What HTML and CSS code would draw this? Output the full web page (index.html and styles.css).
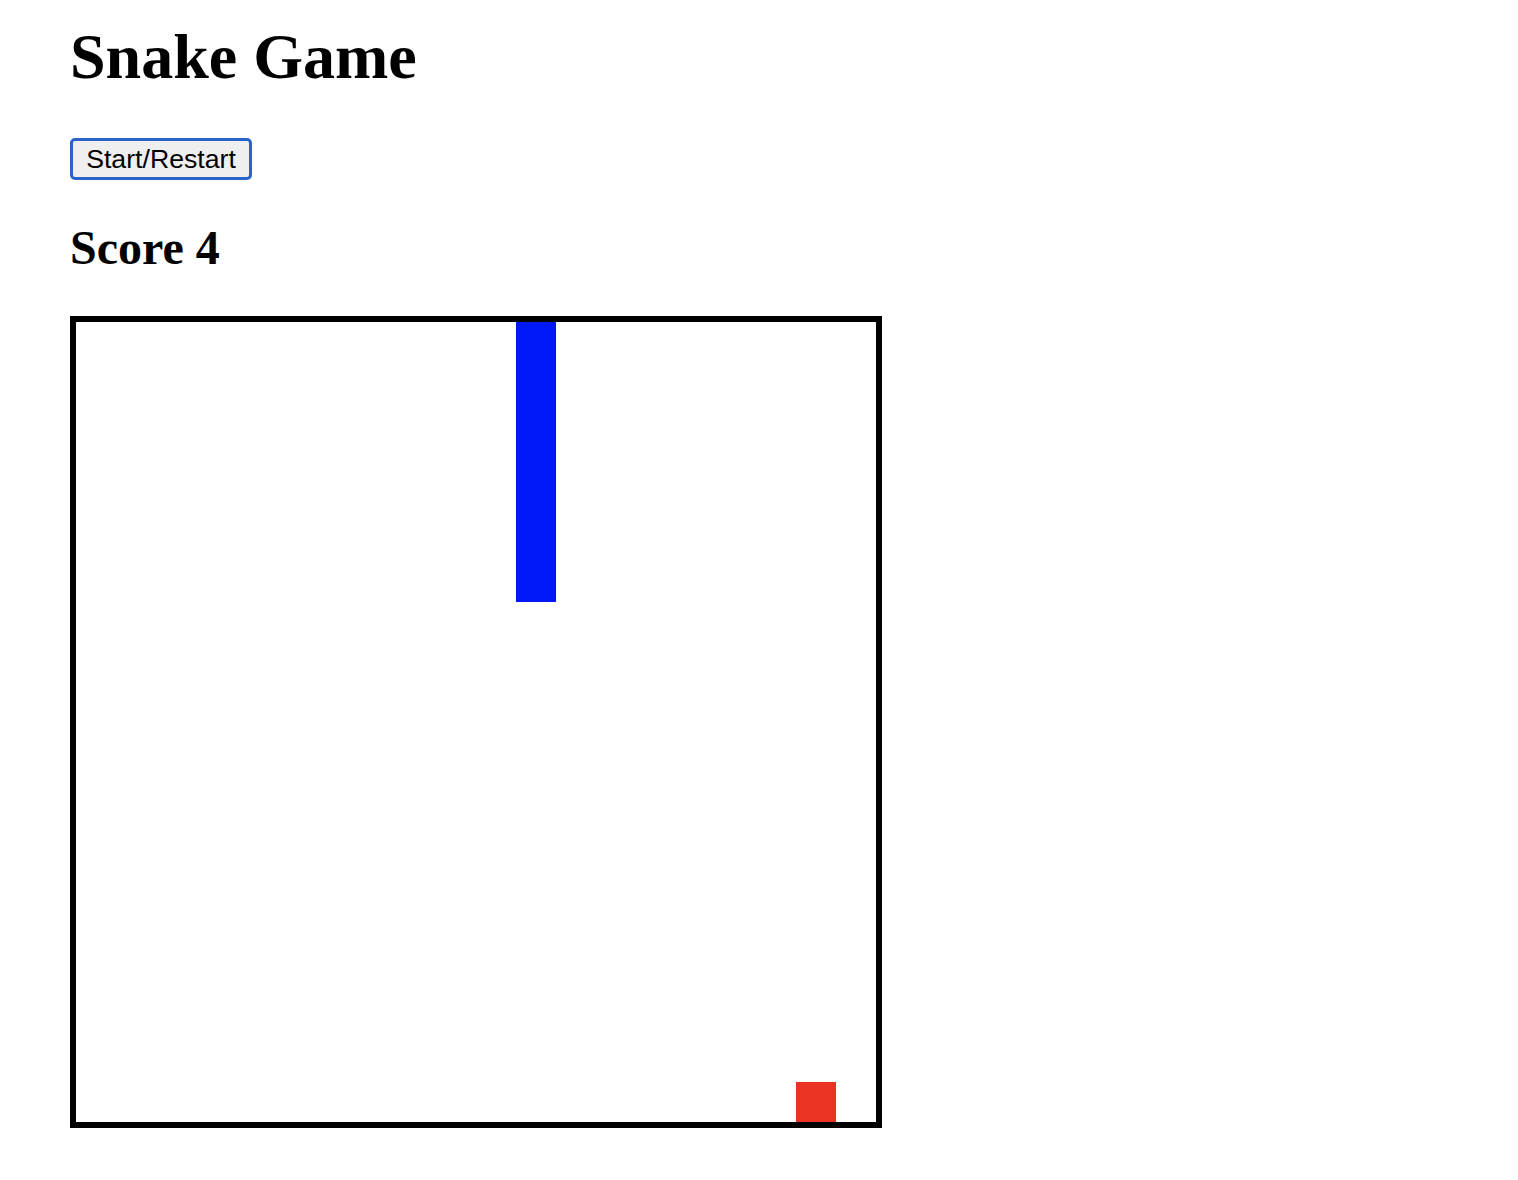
FILE: index.html
```html
<!DOCTYPE html>
<html lang="en">
<head>
<meta charset="utf-8">
<title>Snake Game</title>
<link rel="stylesheet" href="styles.css">
</head>
<body>
<main class="page">
  <h1 class="title">Snake Game</h1>
  <div class="controls">
    <button class="start-btn" type="button">Start/Restart</button>
  </div>
  <h2 class="score">Score 4</h2>
  <div class="board">
    <div class="cell snake" style="grid-area: 1 / 12"></div>
    <div class="cell snake" style="grid-area: 2 / 12"></div>
    <div class="cell snake" style="grid-area: 3 / 12"></div>
    <div class="cell snake" style="grid-area: 4 / 12"></div>
    <div class="cell snake" style="grid-area: 5 / 12"></div>
    <div class="cell snake" style="grid-area: 6 / 12"></div>
    <div class="cell snake" style="grid-area: 7 / 12"></div>
    <div class="cell food" style="grid-area: 20 / 19"></div>
  </div>
</main>
</body>
</html>
```

FILE: styles.css
```css
html, body {
  margin: 0;
  padding: 0;
  background: #ffffff;
}

.page {
  display: flex;
  flex-direction: column;
  align-items: flex-start;
  padding: 20px 0 40px 70px;
  font-family: "Liberation Serif", "Times New Roman", serif;
  color: #000;
}

.title {
  margin: 0;
  font-size: 64px;
  line-height: 74px;
  font-weight: 700;
}

.controls {
  margin-top: 44px;
  display: flex;
}

.start-btn {
  box-sizing: border-box;
  width: 182px;
  height: 42px;
  padding: 0;
  margin: 0;
  border: 3px solid #2b63c8;
  border-radius: 5px;
  background: #efefef;
  color: #000;
  font-family: "Liberation Sans", Arial, sans-serif;
  font-size: 26.67px;
  line-height: 36px;
  text-align: center;
}

.score {
  margin: 40px 0 0 0;
  font-size: 48px;
  line-height: 56px;
  font-weight: 700;
}

.board {
  margin-top: 40px;
  box-sizing: content-box;
  width: 800px;
  height: 800px;
  border: 6px solid #000;
  display: grid;
  grid-template-columns: repeat(20, 40px);
  grid-template-rows: repeat(20, 40px);
  background: #fff;
}

.cell {
  width: 40px;
  height: 40px;
}

.snake {
  background: #0018f5;
}

.food {
  background: #ea3323;
}
```
